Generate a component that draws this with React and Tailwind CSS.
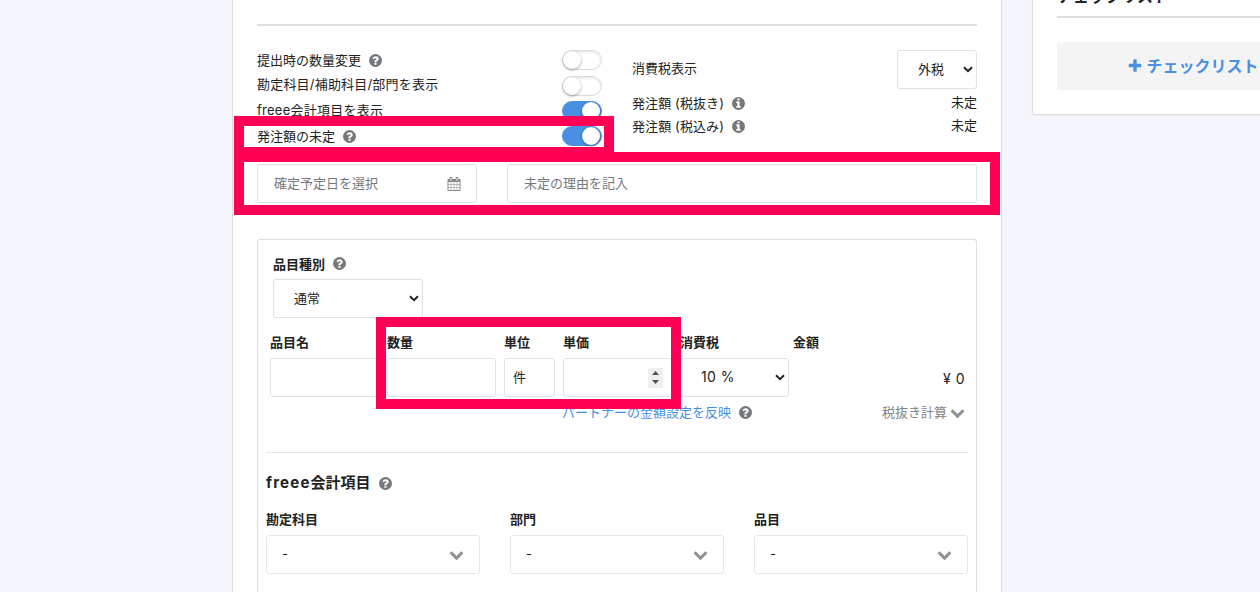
import React, { useState } from 'react';
import clsx from 'clsx';

const ICONS = {
  question: 'M1024 1376v-192q0-14-9-23t-23-9h-192q-14 0-23 9t-9 23v192q0 14 9 23t23 9h192q14 0 23-9t9-23zm256-672q0-88-55.5-163t-138.5-116-170-41q-243 0-371 213-15 24 8 42l132 100q7 6 19 6 16 0 25-12 53-68 86-92 34-24 86-24 48 0 85.5 26t37.5 59q0 38-20 61t-68 45q-63 28-115.5 86.5t-52.5 125.5v36q0 14 9 23t23 9h192q14 0 23-9t9-23q0-19 21.5-49.5t54.5-49.5q32-18 49-28.5t46-35 44.5-48 28-60.5 12.5-81zm384 192q0 209-103 385.5t-279.5 279.5-385.5 103-385.5-103-279.5-279.5-103-385.5 103-385.5 279.5-279.5 385.5-103 385.5 103 279.5 279.5 103 385.5z',
  info: 'M1152 1376v-160q0-14-9-23t-23-9h-96v-512q0-14-9-23t-23-9h-320q-14 0-23 9t-9 23v160q0 14 9 23t23 9h96v320h-96q-14 0-23 9t-9 23v160q0 14 9 23t23 9h448q14 0 23-9t9-23zm-128-896v-160q0-14-9-23t-23-9h-192q-14 0-23 9t-9 23v160q0 14 9 23t23 9h192q14 0 23-9t9-23zm640 416q0 209-103 385.5t-279.5 279.5-385.5 103-385.5-103-279.5-279.5-103-385.5 103-385.5 279.5-279.5 385.5-103 385.5 103 279.5 279.5 103 385.5z',
  calendar: 'M192 1664h288v-288h-288v288zm352 0h320v-288h-320v288zm-352-352h288v-320h-288v320zm352 0h320v-320h-320v320zm-352-384h288v-288h-288v288zm736 736h320v-288h-320v288zm-384-736h320v-288h-320v288zm768 736h288v-288h-288v288zm-384-352h320v-320h-320v320zm-352-864v-288q0-13-9.5-22.5t-22.5-9.5h-64q-13 0-22.5 9.5t-9.5 22.5v288q0 13 9.5 22.5t22.5 9.5h64q13 0 22.5-9.5t9.5-22.5zm736 864h288v-320h-288v320zm-384-384h320v-288h-320v288zm384 0h288v-288h-288v288zm32-480v-288q0-13-9.5-22.5t-22.5-9.5h-64q-13 0-22.5 9.5t-9.5 22.5v288q0 13 9.5 22.5t22.5 9.5h64q13 0 22.5-9.5t9.5-22.5zm384-64v1280q0 52-38 90t-90 38h-1408q-52 0-90-38t-38-90v-1280q0-52 38-90t90-38h128v-96q0-66 47-113t113-47h64q66 0 113 47t47 113v96h384v-96q0-66 47-113t113-47h64q66 0 113 47t47 113v96h128q52 0 90 38t38 90z',
  chevron: 'M1683 808l-742 741q-19 19-45 19t-45-19l-742-741q-19-19-19-45.5t19-45.5l166-165q19-19 45-19t45 19l531 531 531-531q19-19 45-19t45 19l166 165q19 19 19 45.5t-19 45.5z',
  plus: 'M1600 736v192q0 40-28 68t-68 28h-416v416q0 40-28 68t-68 28h-192q-40 0-68-28t-28-68v-416h-416q-40 0-68-28t-28-68v-192q0-40 28-68t68-28h416v-416q0-40 28-68t68-28h192q40 0 68 28t28 68v416h416q40 0 68 28t28 68z',
};

const Icon = ({ name, size = 15, className }) => (
  <svg width={size} height={size} viewBox="0 0 1792 1792" fill="currentColor" className={clsx('shrink-0', className)}>
    <path d={ICONS[name]} />
  </svg>
);

const Help = ({ name = 'question' }) => <Icon name={name} className="ml-[7px] text-[#75797c]" />;

const SelectArrow = () => (
  <svg width="10" height="7" viewBox="0 0 10 7" fill="none" stroke="#222" strokeWidth="2" className="shrink-0">
    <path d="M1 1.2l4 4 4-4" />
  </svg>
);

const Toggle = ({ defaultOn = false }) => {
  const [on, setOn] = useState(defaultOn);
  return (
    <button
      type="button"
      onClick={() => setOn(!on)}
      className={clsx(
        'flex h-5 w-10 shrink-0 items-center rounded-full border',
        on ? 'justify-end border-[#4a90e2] bg-[#4a90e2] pr-px' : 'justify-start border-[#dcdcdc] bg-white shadow-[inset_0_1px_3px_rgba(0,0,0,0.12)]'
      )}
    >
      <span className="h-[18px] w-[18px] rounded-full bg-white shadow-[0_1px_3px_rgba(0,0,0,0.35)]" />
    </button>
  );
};

const Box = ({ className, children }) => (
  <div className={clsx('flex h-[39px] items-center rounded-[3px] border border-[#dae3e7] bg-white', className)}>{children}</div>
);

const Column = ({ label, className, children }) => (
  <div className={clsx('shrink-0', className)}>
    <div className="mb-1.5 h-[19px] leading-[19px] font-bold whitespace-nowrap">{label}</div>
    {children}
  </div>
);

const SETTINGS = [
  { label: '提出時の数量変更', help: true, row: '', text: '' },
  { label: '勘定科目/補助科目/部門を表示', row: 'mt-1.5', text: 'pb-1 tracking-[0.2px]' },
  { label: 'freee会計項目を表示', on: true, row: 'mt-[5px]', text: 'pb-[3px] tracking-[0.25px]' },
  { label: '発注額の未定', help: true, on: true, row: 'mt-[5px]', text: '' },
];

const Settings = () => (
  <div className="flex h-[114px] gap-[30px]">
    <div className="w-[345px]">
      {SETTINGS.map((s) => (
        <div key={s.label} className={clsx('flex h-5 items-center justify-between', s.row)}>
          <div className={clsx('flex items-center', s.text)}>
            <span>{s.label}</span>
            {s.help && <Help />}
          </div>
          <Toggle defaultOn={s.on} />
        </div>
      ))}
    </div>
    <div className="w-[345px]">
      <div className="flex h-[39px] items-center justify-between">
        <span className="pb-[3px]">消費税表示</span>
        <Box className="w-20 justify-between pr-[3px] pl-5"><span className="pb-0.5">外税</span><SelectArrow /></Box>
      </div>
      <div className="mt-[3px]">
        {['発注額 (税抜き)', '発注額 (税込み)'].map((label) => (
          <div key={label} className="flex h-[23px] items-center justify-between">
            <div className="flex items-center">
              <span className="pb-px tracking-[0.1px]">{label}</span>
              <Help name="info" />
            </div>
            <span className="pb-1">未定</span>
          </div>
        ))}
      </div>
    </div>
  </div>
);

const ItemPanel = () => (
  <div className="mt-9 h-[400px] rounded-[3px] border border-[#dcdfe0] px-2">
    <div className="flex h-[39px] items-center px-[7px] pt-2 font-bold">
      品目種別<Help />
    </div>
    <Box className="ml-[7px] w-[150px] justify-between pr-[3px] pl-5"><span className="pb-0.5">通常</span><SelectArrow /></Box>

    <div className="mt-[15px] flex gap-2 px-1">
      <Column label="品目名" className="w-[109px]"><Box /></Column>
      <Column label="数量" className="w-[109px]"><Box /></Column>
      <Column label="単位" className="w-[51px]"><Box className="pb-0.5 pl-2">件</Box></Column>
      <Column label="単価" className="w-[109px]">
        <Box className="justify-end pr-2">
          <span className="flex h-5 w-[15px] flex-col items-center justify-center gap-[5px] bg-[#efefef]">
            <svg width="7" height="4" viewBox="0 0 7 4"><path d="M0 4L3.5 0 7 4z" fill="#505050" /></svg>
            <svg width="7" height="4" viewBox="0 0 7 4"><path d="M0 0L3.5 4 7 0z" fill="#505050" /></svg>
          </span>
        </Box>
      </Column>
      <Column label="消費税" className="w-[109px]">
        <Box className="justify-between pr-[3px] pl-5"><span className="pb-px text-sm tracking-[0.4px]">10 %</span><SelectArrow /></Box>
      </Column>
      <Column label="金額" className="-ml-1 w-[172px]">
        <div className="flex h-[39px] items-center justify-end pt-0.5 text-sm tracking-[0.5px]">¥ 0</div>
      </Column>
    </div>
    <div className="mt-[5px] flex h-5 items-center justify-between pr-[3px] pl-[296px]">
      <div className="flex items-center text-[#4a90e2]">パートナーの金額設定を反映<Help /></div>
      <div className="flex items-center gap-[3px] text-[#808488]">税抜き計算<Icon name="chevron" className="text-[#8f9396]" /></div>
    </div>

    <div className="mt-[30px] h-px bg-[#dfe6e9]" />
    <div className="mt-[19px] flex h-[22px] items-center text-[15px] font-bold">
      <span className="tracking-[1.2px]">freee</span>会計項目<Help />
    </div>
    <div className="mt-4 flex gap-[30px]">
      {['勘定科目', '部門', '品目'].map((label) => (
        <Column key={label} label={label} className="w-[214px]">
          <Box className="justify-between border-[#e4e6e8] pr-[15px] pl-[15px]"><span className="pb-0.5">-</span><Icon name="chevron" className="text-[#8f9396]" /></Box>
        </Column>
      ))}
    </div>
  </div>
);

const Checklist = () => (
  <aside className="flex h-[115px] w-[370px] shrink-0 flex-col rounded-b-[3px] border border-t-0 border-[#dcdedf] bg-white px-6 shadow-[0_1px_2px_rgba(0,0,0,0.05)]">
    <div className="-mt-4 h-8 shrink-0 text-base leading-6 font-bold">チェックリスト</div>
    <div className="h-0.5 shrink-0 bg-[#dcdedf]" />
    <button type="button" className="mt-6 flex h-12 w-full shrink-0 items-center justify-center gap-[3px] rounded-[3px] bg-[#f4f4f4] text-base font-bold text-[#4a90e2]">
      <Icon name="plus" size={16} />チェックリストを追加
    </button>
  </aside>
);

const App = () => (
  <div className="relative flex h-[592px] w-[1260px] gap-[30px] overflow-hidden bg-[#f5f6fb] pl-[232px] font-['Inter','Noto_Sans_CJK_JP',sans-serif] text-[13px] leading-5 text-[#222]">
    <main className="h-[640px] w-[770px] shrink-0 border-x border-[#dcdedf] bg-white px-6">
      <div className="mt-6 mb-6 h-0.5 bg-[#dce0e3]" />
      <Settings />
      <div className="flex gap-[30px] text-[#75797c]">
        <Box className="w-[220px] justify-between pr-[15px] pl-4"><span className="pb-0.5">確定予定日を選択</span><Icon name="calendar" size={14} className="text-[#85898c]" /></Box>
        <Box className="w-[470px] pb-0.5 pl-4">未定の理由を記入</Box>
      </div>
      <ItemPanel />
    </main>
    <Checklist />

    {/* highlight frames over the form */}
    <div className="pointer-events-none absolute top-[116px] left-[234px] h-[41px] w-[380px] border-10 border-[#ff0055]" />
    <div className="pointer-events-none absolute top-[152px] left-[234px] h-[63px] w-[766px] border-10 border-[#ff0055]" />
    <div className="pointer-events-none absolute top-[317px] left-[376px] h-[92px] w-[305px] border-10 border-[#ff0055]" />
  </div>
);

export default App;
